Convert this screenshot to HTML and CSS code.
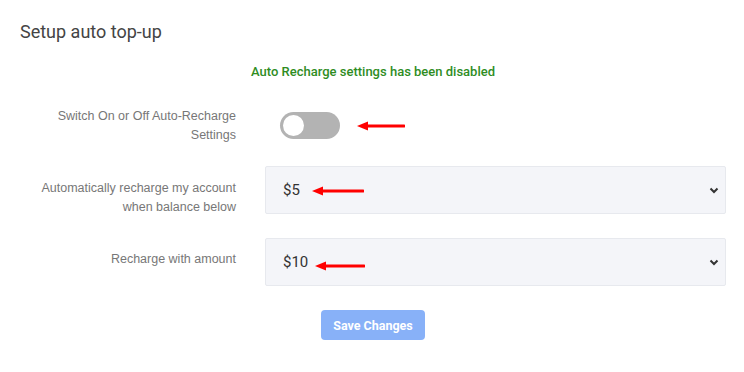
FILE: index.html
```html
<!DOCTYPE html>
<html>
<head>
<meta charset="UTF-8">
<title>Setup auto top-up</title>
<link rel="stylesheet" href="styles.css">
</head>
<body>
	<div class="panel">
		<h2 class="panelTitle">Setup auto top-up</h2>
		<p class="statusMsg">Auto Recharge settings has been disabled</p>

		<div class="formRow rowSwitch">
			<label class="rowLabel">Switch On or Off Auto-Recharge Settings</label>
			<div class="rowControl">
				<span class="toggle"><span class="knob"></span></span>
				<svg class="marker markerSwitch" width="48" height="10" viewBox="0 0 48 10">
					<path d="M47 5 H9" stroke="#f00" stroke-width="3" stroke-linecap="round"/>
					<path d="M0 5 L11 0.5 L11 9.5 Z" fill="#f00"/>
				</svg>
			</div>
		</div>

		<div class="formRow rowLow">
			<label class="rowLabel">Automatically recharge my account when balance below</label>
			<div class="rowControl">
				<div class="selectBox">
					<span class="selectValue">$5</span>
					<svg class="chevron" width="10" height="7" viewBox="0 0 10 7">
						<path d="M1.5 1.5 L5 5 L8.5 1.5" fill="none" stroke="#333" stroke-width="2"/>
					</svg>
					<svg class="marker markerLow" width="52" height="10" viewBox="0 0 52 10">
						<path d="M51 5 H9" stroke="#f00" stroke-width="3" stroke-linecap="round"/>
						<path d="M0 5 L11 0.5 L11 9.5 Z" fill="#f00"/>
					</svg>
				</div>
			</div>
		</div>

		<div class="formRow rowAmount">
			<label class="rowLabel">Recharge with amount</label>
			<div class="rowControl">
				<div class="selectBox">
					<span class="selectValue">$10</span>
					<svg class="chevron" width="10" height="7" viewBox="0 0 10 7">
						<path d="M1.5 1.5 L5 5 L8.5 1.5" fill="none" stroke="#333" stroke-width="2"/>
					</svg>
					<svg class="marker markerAmount" width="50" height="10" viewBox="0 0 50 10">
						<path d="M49 5 H9" stroke="#f00" stroke-width="3" stroke-linecap="round"/>
						<path d="M0 5 L11 0.5 L11 9.5 Z" fill="#f00"/>
					</svg>
				</div>
			</div>
		</div>

		<div class="actions">
			<button type="button" class="saveBtn" disabled>Save Changes</button>
		</div>
	</div>
</body>
</html>
```

FILE: styles.css
```css
body {
	margin: 0px;
	background: #fff;
	font-family: Roboto, "Liberation Sans", sans-serif;
}

.panel {
	width: 744px;
	height: 372px;
	box-sizing: border-box;
	padding: 20px 18px 0px 20px;
}

.panelTitle {
	margin: 0px;
	font-size: 18px;
	font-weight: 400;
	line-height: 24px;
	color: #444;
}

.statusMsg {
	margin: 20px 0px 0px 0px;
	text-align: center;
	font-size: 13px;
	font-weight: 500;
	line-height: 16px;
	color: #2f8d1f;
}

.formRow {
	display: grid;
	grid-template-columns: 216px 461px;
	column-gap: 29px;
	margin-top: 21px;
}

.rowSwitch {
	margin-top: 22px;
}

.rowLabel {
	text-align: right;
	font-family: "Liberation Sans", Arial, sans-serif;
	font-size: 12.5px;
	line-height: 19px;
	color: #777;
	padding-top: 13px;
}

.rowSwitch .rowLabel {
	padding-top: 5px;
}

.rowAmount .rowLabel {
	padding-top: 12px;
}

.rowControl {
	position: relative;
}

.toggle {
	display: inline-block;
	position: relative;
	margin: 10px 0px 0px 15px;
	width: 60px;
	height: 27px;
	border-radius: 14px;
	background: #b3b3b3;
}

.knob {
	position: absolute;
	left: 3px;
	top: 3px;
	width: 21px;
	height: 21px;
	border-radius: 50%;
	background: #fff;
}

.selectBox {
	position: relative;
	display: flex;
	align-items: center;
	height: 48px;
	box-sizing: border-box;
	padding: 0px 6px 0px 17px;
	background: #f4f5f9;
	border: 1px solid #e7e9ee;
	border-radius: 2px;
}

.selectValue {
	flex: 1;
	font-size: 15px;
	color: #333;
}

.chevron {
	display: block;
}

.marker {
	position: absolute;
}

.markerSwitch {
	left: 92px;
	top: 19px;
}

.markerLow {
	left: 46px;
	top: 19px;
}

.markerAmount {
	left: 49px;
	top: 22px;
}

.actions {
	margin-top: 24px;
	text-align: center;
}

.saveBtn {
	width: 104px;
	height: 30px;
	border: none;
	border-radius: 4px;
	background: #88b1f8;
	color: #fff;
	font-family: Roboto, sans-serif;
	font-size: 12.5px;
	font-weight: 700;
}
```
